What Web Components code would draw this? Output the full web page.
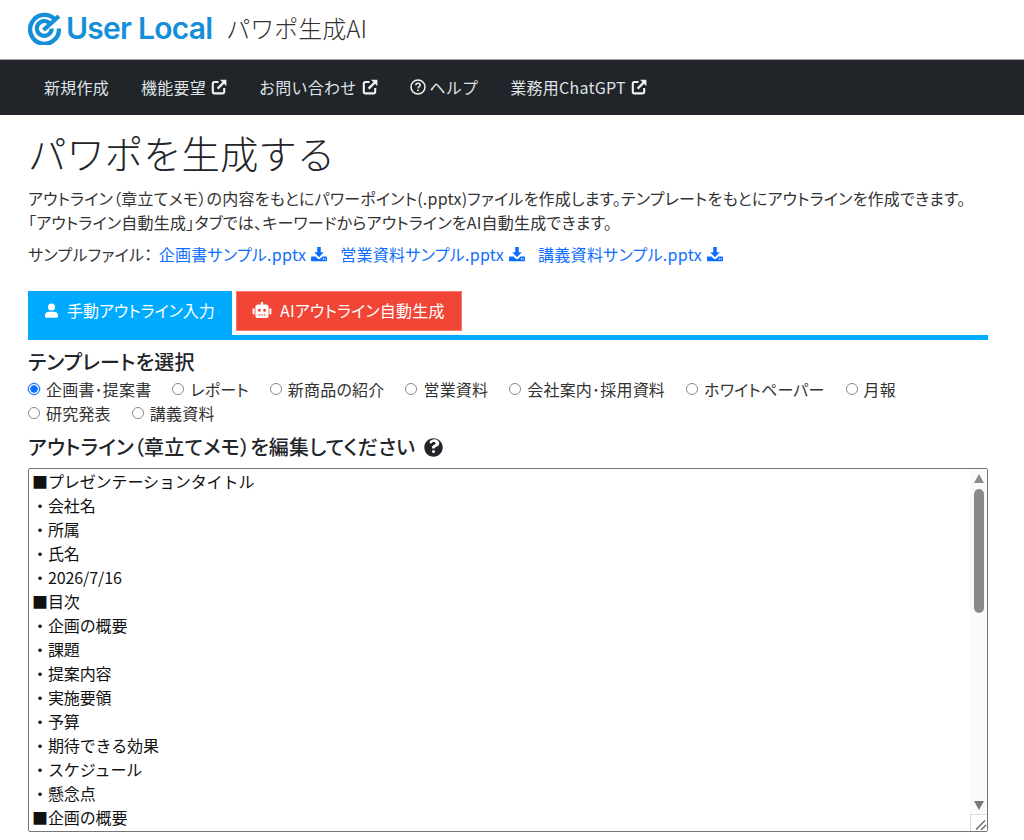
<!DOCTYPE html>
<html lang="ja">
<head>
<meta charset="utf-8">
<title>パワポ生成AI</title>
<style>
  html, body { margin: 0; padding: 0; background: #fff; }
  body { font-family: "Noto Sans CJK JP", "Noto Sans", sans-serif; color: #212529; font-size: 16px; font-feature-settings: "palt"; }
</style>
</head>
<body>
<site-header></site-header>
<site-nav></site-nav>
<page-intro></page-intro>
<mode-tabs></mode-tabs>
<template-picker></template-picker>
<outline-editor></outline-editor>

<script>
const ICONS = {
  external: '<svg viewBox="0 0 16 16" width="16" height="16"><path d="M7.5 3H3.2A1.4 1.4 0 0 0 1.8 4.4v8.6a1.4 1.4 0 0 0 1.4 1.4h8.6a1.4 1.4 0 0 0 1.4-1.4V9" fill="none" stroke="currentColor" stroke-width="2.1"/><path d="M6.6 9.6L13 3.2" fill="none" stroke="currentColor" stroke-width="2.3"/><path d="M9 .8h6.4v6.4z" fill="currentColor"/></svg>',
  help: '<svg viewBox="0 0 16 16" width="16" height="16" fill="none" stroke="currentColor"><circle cx="8" cy="8" r="7" stroke-width="1.5"/><path d="M5.8 6.3c0-1.3 1-2.1 2.2-2.1s2.2.8 2.2 1.9c0 1.6-2.2 1.7-2.2 3.3" stroke-width="1.5"/><circle cx="8" cy="11.4" r=".9" fill="currentColor" stroke="none"/></svg>',
  helpSolid: '<svg viewBox="0 0 512 512" width="19" height="19" fill="#212529"><path d="M256 8C119 8 8 119 8 256s111 248 248 248 248-111 248-248S393 8 256 8zm0 396a42 42 0 1 1 0-84 42 42 0 0 1 0 84zm40-137v5c0 7-5 12-12 12h-56c-7 0-12-5-12-12v-11c0-45 34-63 60-77 22-13 36-21 36-37 0-22-28-36-50-36-29 0-42 14-61 38-4 5-11 6-16 2l-34-26c-5-4-6-11-3-16 31-46 71-72 132-72 63 0 131 49 131 114 0 86-115 88-115 116z"/></svg>',
  download: '<svg viewBox="0 0 16 16" width="16" height="16" fill="#0d6efd"><path d="M6.2 1h3.6v5.2h3L8 11.2 3.2 6.2h3z"/><path d="M.6 10.6h3.9L6.6 12.6a2 2 0 0 0 2.8 0l2.1-2h3.9c.3 0 .6.3.6.6v3.4c0 .3-.3.6-.6.6H.6a.6.6 0 0 1-.6-.6v-3.4c0-.3.3-.6.6-.6z"/><circle cx="12.4" cy="13" r=".7" fill="#fff"/><circle cx="14.2" cy="13" r=".7" fill="#fff"/></svg>',
  user: '<svg viewBox="0 0 16 16" width="15" height="15" fill="#fff"><circle cx="8" cy="4.2" r="3.8"/><path d="M5 9.3h6c2.2 0 4 1.8 4 4v.9c0 .8-.7 1.4-1.4 1.4H2.4c-.7 0-1.4-.6-1.4-1.4v-.9c0-2.2 1.8-4 4-4z"/></svg>',
  robot: '<svg viewBox="0 0 20 16" width="20" height="16" fill="#fff"><rect x="9" y="0" width="2" height="3"/><circle cx="10" cy="1.2" r="1.2"/><path fill-rule="evenodd" d="M6 2.6h8a2.6 2.6 0 0 1 2.6 2.6v8.2A2.6 2.6 0 0 1 14 16H6a2.6 2.6 0 0 1-2.6-2.6V5.2A2.6 2.6 0 0 1 6 2.6zm1.4 4.2a1.5 1.5 0 1 0 0 3 1.5 1.5 0 0 0 0-3zm5.2 0a1.5 1.5 0 1 0 0 3 1.5 1.5 0 0 0 0-3zM6.6 12.2v1.4h1.6v-1.4zm2.6 0v1.4h1.6v-1.4zm2.6 0v1.4h1.6v-1.4z"/><rect x="0.6" y="6.2" width="2" height="6.2" rx="1"/><rect x="17.4" y="6.2" width="2" height="6.2" rx="1"/></svg>'
};

class SiteHeader extends HTMLElement {
  constructor() {
    super();
    this.attachShadow({ mode: "open" });
    this.shadowRoot.innerHTML = `
      <style>
        :host { display: flex; align-items: center; height: 56px; padding: 0 0 3px 28px; background: #fff; }
        .logo { display: flex; align-items: center; gap: 5px; color: #158fd8; }
        .logo svg { display: block; }
        .name { font: 600 30px/1 "Inter", "Lato", sans-serif; letter-spacing: -0.75px; font-feature-settings: normal; }
        .app { margin-left: 14px; font-size: 24px; color: #333; font-weight: 300; line-height: 1; font-feature-settings: normal; }
      </style>
      <div class="logo">
        <svg viewBox="0 0 32 32" width="33" height="33" fill="none" stroke="#158fd8">
          <path d="M26.5 7.5A14 14 0 1 0 30 16" stroke-width="4.2"/>
          <path d="M21.4 11.4A7.2 7.2 0 1 0 23 16" stroke-width="4"/>
          <path d="M15 17.5L30 4" stroke-width="4"/>
        </svg>
        <span class="name">User Local</span>
      </div>
      <span class="app">パワポ生成AI</span>
    `;
  }
}

class NavLink extends HTMLElement {
  constructor() {
    super();
    this.attachShadow({ mode: "open" });
    const icon = this.getAttribute("icon");
    const before = icon === "help" ? `<span class="i">${ICONS.help}</span>` : "";
    const after = icon === "external" ? `<span class="i">${ICONS.external}</span>` : "";
    this.shadowRoot.innerHTML = `
      <style>
        :host { display: flex; align-items: center; gap: ${icon === "help" ? 4 : 5}px; color: #dee2e6; font-size: 16px; letter-spacing: 0.25px; font-feature-settings: normal; }
        .i { display: flex; color: #f1f3f5; }
      </style>
      ${before}<slot></slot>${after}
    `;
  }
}

class SiteNav extends HTMLElement {
  constructor() {
    super();
    this.attachShadow({ mode: "open" });
    this.shadowRoot.innerHTML = `
      <style>
        :host { display: flex; align-items: center; gap: 32px; height: 53px; padding: 0 0 2px 44px; background: #212529; border-top: 1px solid #a5a5a5; }
      </style>
      <nav-link>新規作成</nav-link>
      <nav-link icon="external">機能要望</nav-link>
      <nav-link icon="external">お問い合わせ</nav-link>
      <nav-link icon="help">ヘルプ</nav-link>
      <nav-link icon="external">業務用ChatGPT</nav-link>
    `;
  }
}

class SampleLink extends HTMLElement {
  constructor() {
    super();
    this.attachShadow({ mode: "open" });
    this.shadowRoot.innerHTML = `
      <style>
        :host { display: inline-flex; align-items: center; gap: 5px; color: #0d6efd; letter-spacing: 0.28px; }
        span { display: flex; }
      </style>
      <slot></slot><span>${ICONS.download}</span>
    `;
  }
}

class PageIntro extends HTMLElement {
  constructor() {
    super();
    this.attachShadow({ mode: "open" });
    this.shadowRoot.innerHTML = `
      <style>
        :host { display: block; padding: 11px 28px 0; color: #333; }
        h1 { margin: 0 0 8px; font-size: 38.4px; font-weight: 300; line-height: 52px; color: #212529; font-feature-settings: normal; }
        p { margin: 0; line-height: 24px; white-space: nowrap; letter-spacing: 0.22px; }
        .samples { display: flex; gap: 13px; margin-top: 8px; height: 24px; align-items: center; }
        .samples b { font-weight: 400; margin-right: -7px; letter-spacing: 0.3px; }
      </style>
      <h1>パワポを生成する</h1>
      <p>アウトライン（章立てメモ）の内容をもとにパワーポイント(.pptx)ファイルを作成します。テンプレートをもとにアウトラインを作成できます。</p>
      <p>「アウトライン自動生成」タブでは、キーワードからアウトラインをAI自動生成できます。</p>
      <div class="samples">
        <b>サンプルファイル：</b>
        <sample-link>企画書サンプル.pptx</sample-link>
        <sample-link>営業資料サンプル.pptx</sample-link>
        <sample-link>講義資料サンプル.pptx</sample-link>
      </div>
    `;
  }
}

class ModeTabs extends HTMLElement {
  constructor() {
    super();
    this.attachShadow({ mode: "open" });
    this.shadowRoot.innerHTML = `
      <style>
        :host { display: flex; align-items: flex-start; gap: 4px; margin: 25px 36px 0 28px; height: 44px; border-bottom: 5px solid #00aaff; }
        .tab { display: flex; align-items: center; gap: 8px; height: 40px; box-sizing: border-box; padding: 0 0 2px 16px; color: #fff; }
        .manual { width: 204px; background: #00aaff; height: 44px; padding-bottom: 6px; }
        .auto { width: 226px; background: #f14635; border: 1px solid #f5796d; padding-left: 15px; letter-spacing: 0.2px; }
        svg { display: block; }
      </style>
      <div class="tab manual">${ICONS.user}<span>手動アウトライン入力</span></div>
      <div class="tab auto">${ICONS.robot}<span>AIアウトライン自動生成</span></div>
    `;
  }
}

class RadioOption extends HTMLElement {
  constructor() {
    super();
    this.attachShadow({ mode: "open" });
    const on = this.hasAttribute("checked");
    this.shadowRoot.innerHTML = `
      <style>
        :host { display: inline-flex; align-items: center; gap: 6px; height: 24px; color: #333; letter-spacing: 0.2px; }
        i { width: 12px; height: 12px; box-sizing: border-box; border-radius: 50%; border: 1px solid #8a8a8a; flex: none; background: #fff; }
        i.on { border: 1px solid #0d6efd; background: radial-gradient(circle, #0d6efd 0 3.4px, #fff 4px); box-shadow: 0 0 0 .5px #8ab6fd; }
      </style>
      <i class="${on ? "on" : ""}"></i><slot></slot>
    `;
  }
}

class TemplatePicker extends HTMLElement {
  constructor() {
    super();
    this.attachShadow({ mode: "open" });
    this.shadowRoot.innerHTML = `
      <style>
        :host { display: block; padding: 9px 28px 0; }
        h2 { margin: 0; font-size: 20px; font-weight: 500; line-height: 26px; color: #212529; letter-spacing: 0.2px; }
        .opts { display: flex; flex-wrap: wrap; column-gap: 21px; width: 900px; margin-top: 2px; }
      </style>
      <h2>テンプレートを選択</h2>
      <div class="opts">
        <radio-option checked>企画書･提案書</radio-option>
        <radio-option>レポート</radio-option>
        <radio-option>新商品の紹介</radio-option>
        <radio-option>営業資料</radio-option>
        <radio-option>会社案内･採用資料</radio-option>
        <radio-option>ホワイトペーパー</radio-option>
        <radio-option>月報</radio-option>
        <radio-option>研究発表</radio-option>
        <radio-option>講義資料</radio-option>
      </div>
    `;
  }
}

class OutlineEditor extends HTMLElement {
  constructor() {
    super();
    this.attachShadow({ mode: "open" });
    const lines = ["■プレゼンテーションタイトル","・会社名","・所属","・氏名","・2026/7/16","■目次","・企画の概要","・課題","・提案内容","・実施要領","・予算","・期待できる効果","・スケジュール","・懸念点","■企画の概要"];
    this.shadowRoot.innerHTML = `
      <style>
        :host { display: block; padding: 9px 36px 0 28px; }
        h2 { display: flex; align-items: center; gap: 9px; margin: 0 0 8px; font-size: 20px; font-weight: 500; line-height: 26px; color: #212529; letter-spacing: 0.2px; }
        h2 svg { display: block; }
        .box { display: flex; height: 364px; box-sizing: border-box; border: 1px solid #767676; border-radius: 2px; background: #fff; }
        .text { flex: 1; padding: 0 3px; overflow: hidden; line-height: 24px; color: #111; font-feature-settings: normal; letter-spacing: -0.1px; }
        .text div { white-space: nowrap; height: 24px; }
        .bar { width: 17px; flex: none; display: flex; flex-direction: column; align-items: center; background: #fafafa; }
        .up, .down { width: 0; height: 0; border-left: 5.5px solid transparent; border-right: 5.5px solid transparent; flex: none; }
        .up { border-bottom: 9px solid #8a8a8a; margin-top: 5px; }
        .thumb { width: 10px; height: 124px; margin-top: 6px; border-radius: 5px; background: #8a8a8a; flex: none; }
        .down { border-top: 9px solid #7a7a7a; margin-top: auto; margin-bottom: 4px; }
        .grip { width: 17px; height: 17px; box-sizing: border-box; border-left: 1px solid #dcdcdc; border-top: 1px solid #dcdcdc; background: #fff; flex: none; display: flex; }
      </style>
      <h2><span>アウトライン（章立てメモ）を編集してください</span>${ICONS.helpSolid}</h2>
      <div class="box">
        <div class="text">${lines.map(l => `<div>${l}</div>`).join("")}</div>
        <div class="bar">
          <div class="up"></div>
          <div class="thumb"></div>
          <div class="down"></div>
          <div class="grip"><svg viewBox="0 0 16 16" width="16" height="16" stroke="#666" fill="none"><path d="M5 14.5L14 5.5M10 15L15 10" stroke-width="1.3"/></svg></div>
        </div>
      </div>
    `;
  }
}

customElements.define("nav-link", NavLink);
customElements.define("site-header", SiteHeader);
customElements.define("site-nav", SiteNav);
customElements.define("sample-link", SampleLink);
customElements.define("page-intro", PageIntro);
customElements.define("mode-tabs", ModeTabs);
customElements.define("radio-option", RadioOption);
customElements.define("template-picker", TemplatePicker);
customElements.define("outline-editor", OutlineEditor);
</script>
</body>
</html>
